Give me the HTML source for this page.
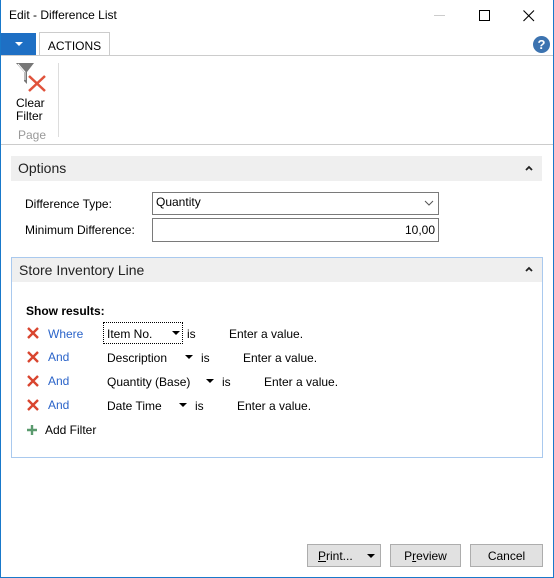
<!DOCTYPE html><html><head><style>
*{box-sizing:border-box;margin:0;padding:0}
body{width:554px;height:578px;position:relative;background:#fff;font-family:"Liberation Sans",sans-serif;font-size:12px;color:#000;overflow:hidden}
.a{position:absolute}
.win{left:0;top:0;width:554px;height:578px;border:1px solid #1979ca;border-top:none}
.hdr{background:#efefef;font-size:14px;color:#222;padding:4px 0 0 7px}
.inp{border:1px solid #7a7a7a;background:#fff;padding:2px 3px}
.btn{border:1px solid #adadad;background:#e1e1e1;text-align:center;padding-top:4px;height:23px}
.blue{color:#2b64c9}
.tri{display:inline-block;width:0;height:0;border-left:4px solid transparent;border-right:4px solid transparent;border-top:4px solid #000}
</style></head><body>
<div class="a win"></div>
<div class="a" style="left:9px;top:8px;font-size:12px">Edit - Difference List</div>
<div class="a" style="left:434px;top:15px;width:11px;height:1px;background:#ccc"></div>
<div class="a" style="left:479px;top:10px;width:11px;height:11px;border:1px solid #000"></div>
<svg class="a" style="left:523px;top:10px" width="12" height="12"><path d="M0.5 0.5L11 11M11 0.5L0.5 11" stroke="#000" stroke-width="1.1"/></svg>
<div class="a" style="left:1px;top:33px;width:35px;height:22px;background:#1e6fc4"></div>
<div class="a" style="left:15px;top:42px;border-left:4px solid transparent;border-right:4px solid transparent;border-top:4px solid #fff"></div>
<div class="a" style="left:39px;top:32px;width:71px;height:24px;border:1px solid #ccc;border-bottom:none;background:#fff;text-align:center;padding-top:6px">ACTIONS</div>
<div class="a" style="left:1px;top:55px;width:552px;height:1px;background:#ccc"></div>
<div class="a" style="left:533px;top:36px;width:17px;height:17px;border-radius:50%;background:#3c73b0;color:#fff;font-weight:bold;font-size:13px;text-align:center;line-height:17px">?</div>
<svg class="a" style="left:15px;top:62px" width="34" height="32"><path d="M1 1H19L12 10V22L9 19V10Z" fill="#777"/><path d="M3 2L10 10V18" stroke="#fff" fill="none" stroke-width="1"/><path d="M14 14L30 29M30 14L14 29" stroke="#e0533c" stroke-width="2.5"/></svg>
<div class="a" style="left:16px;top:97px;line-height:13px">Clear<br>Filter</div>
<div class="a" style="left:18px;top:128px;color:#999">Page</div>
<div class="a" style="left:58px;top:63px;width:1px;height:74px;background:#ddd"></div>
<div class="a" style="left:1px;top:144px;width:552px;height:1px;background:#ccc"></div>
<div class="a hdr" style="left:11px;top:156px;width:531px;height:25px">Options</div>
<svg class="a" style="left:525px;top:165px" width="8" height="6"><path d="M1 5L4 2L7 5" stroke="#222" stroke-width="1.8" fill="none"/></svg>
<div class="a" style="left:25px;top:197px">Difference Type:</div>
<div class="a inp" style="left:152px;top:192px;width:287px;height:23px">Quantity</div>
<svg class="a" style="left:424px;top:200px" width="10" height="6"><path d="M1 1L5 5L9 1" stroke="#555" fill="none"/></svg>
<div class="a" style="left:25px;top:223px">Minimum Difference:</div>
<div class="a inp" style="left:152px;top:218px;width:287px;height:24px;text-align:right;padding-top:4px">10,00</div>
<div class="a" style="left:11px;top:257px;width:532px;height:201px;border:1px solid #a9c9ee"></div>
<div class="a hdr" style="left:12px;top:258px;width:530px;height:24px">Store Inventory Line</div>
<svg class="a" style="left:525px;top:266px" width="8" height="6"><path d="M1 5L4 2L7 5" stroke="#222" stroke-width="1.8" fill="none"/></svg>
<div class="a" style="left:26px;top:304px;font-weight:bold">Show results:</div>
<div class="a" style="left:103px;top:322px;width:80px;height:22px;border:1px dotted #000"></div>
<svg class="a" style="left:27px;top:327px" width="12" height="96"><g stroke="#d9452f" stroke-width="2.4"><path d="M1 1L11 11M11 1L1 11"/><path d="M1 25L11 35M11 25L1 35"/><path d="M1 49L11 59M11 49L1 59"/><path d="M1 73L11 83M11 73L1 83"/></g></svg>
<div class="a blue" style="left:48px;top:327px">Where</div><div class="a" style="left:107px;top:327px">Item No.</div><div class="a tri" style="left:172px;top:331px"></div><div class="a" style="left:187px;top:327px">is</div><div class="a" style="left:229px;top:327px">Enter a value.</div>
<div class="a blue" style="left:48px;top:350px">And</div><div class="a" style="left:107px;top:351px">Description</div><div class="a tri" style="left:185px;top:355px"></div><div class="a" style="left:201px;top:351px">is</div><div class="a" style="left:243px;top:351px">Enter a value.</div>
<div class="a blue" style="left:48px;top:374px">And</div><div class="a" style="left:107px;top:375px">Quantity (Base)</div><div class="a tri" style="left:206px;top:379px"></div><div class="a" style="left:222px;top:375px">is</div><div class="a" style="left:264px;top:375px">Enter a value.</div>
<div class="a blue" style="left:48px;top:398px">And</div><div class="a" style="left:107px;top:399px">Date Time</div><div class="a tri" style="left:179px;top:403px"></div><div class="a" style="left:195px;top:399px">is</div><div class="a" style="left:237px;top:399px">Enter a value.</div>
<svg class="a" style="left:27px;top:425px" width="10" height="10"><path d="M5 0V10M0 5H10" stroke="#5a9a6e" stroke-width="2.4"/></svg>
<div class="a" style="left:45px;top:423px">Add Filter</div>
<div class="a btn" style="left:307px;top:544px;width:74px;text-align:left;padding-left:10px"><u>P</u>rint...</div><div class="a tri" style="left:367px;top:554px"></div>
<div class="a btn" style="left:390px;top:544px;width:71px">P<u>r</u>eview</div>
<div class="a btn" style="left:470px;top:544px;width:73px">Cancel</div>
</body></html>
